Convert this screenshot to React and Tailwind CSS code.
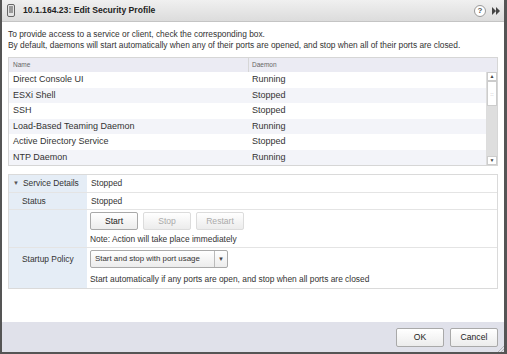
const rows = [
  ["Direct Console UI", "Running"],
  ["ESXi Shell", "Stopped"],
  ["SSH", "Stopped"],
  ["Load-Based Teaming Daemon", "Running"],
  ["Active Directory Service", "Stopped"],
  ["NTP Daemon", "Running"],
];

function Btn({ children, disabled, className = "" }) {
  return (
    <div
      className={`flex h-[18px] w-[48px] items-center justify-center rounded-[2px] border bg-gradient-to-b from-white to-[#ececec] text-[8.6px] ${
        disabled ? "border-[#dcdcdc] text-[#aaa]" : "border-[#a9a9a9] text-[#222]"
      } ${className}`}
    >
      {children}
    </div>
  );
}

export default function App() {
  return (
    <div
      className="flex h-[354px] w-[507px] flex-col border-b-2 border-l-2 border-r-[3px] border-[#555] bg-white text-[#333]"
      style={{ fontFamily: '"Liberation Sans", Arial, sans-serif' }}
    >
      <div className="flex h-[22px] shrink-0 items-center border-b border-[#c4c4c4] bg-gradient-to-b from-[#f0f0f0] to-[#dcdcdc] pl-[4px] pr-[4px]">
        <svg width="8" height="13" viewBox="0 0 8 13" className="ml-[1px]">
          <rect x="0.5" y="0.5" width="7" height="12" rx="1.5" fill="#e4e4e4" stroke="#666" />
          <rect x="2" y="2" width="4" height="7" fill="#9a9a9a" />
        </svg>
        <span className="ml-[8px] text-[8.6px] font-bold text-[#222]">10.1.164.23: Edit Security Profile</span>
        <div className="ml-auto flex items-center gap-[6px]">
          <div className="flex h-[12px] w-[12px] items-center justify-center rounded-full border border-[#999] bg-white text-[8px] font-bold text-[#555]">?</div>
          <svg width="8" height="8" viewBox="0 0 8 8">
            <path d="M0 0 L4 4 L0 8Z M4 0 L8 4 L4 8Z" fill="#444" />
          </svg>
        </div>
      </div>

      <div className="flex flex-1 flex-col px-[6px] pt-[7px]">
        <p className="text-[8.35px] leading-[11px]">To provide access to a service or client, check the corresponding box.</p>
        <p className="text-[8.35px] leading-[11px]">
          By default, daemons will start automatically when any of their ports are opened, and stop when all of their ports are closed.
        </p>

        <div className="mt-[6px] w-[490px] border border-[#d6d6d6]">
          <div className="flex h-[14px] items-center bg-[#ebebf3] text-[6.5px] text-[#666]">
            <div className="w-[240px] self-stretch border-r border-[#d6d6d6] pl-[4px] leading-[14px]">Name</div>
            <div className="pl-[3px]">Daemon</div>
          </div>
          <div className="flex">
            <div className="flex-1">
              {rows.map(([n, s], i) => (
                <div
                  key={n}
                  className={`flex h-[15.5px] items-center text-[9px] ${i % 2 ? "bg-[#f3f4f9]" : "bg-white"}`}
                >
                  <div className="w-[240px] pl-[4px]">{n}</div>
                  <div className="pl-[3px]">{s}</div>
                </div>
              ))}
            </div>
            <div className="flex w-[11px] flex-col border-l border-[#ddd] bg-white">
              <div className="flex h-[9px] items-center justify-center border border-[#ccc] text-[5px] text-[#444]">▲</div>
              <div className="flex h-[25px] items-center justify-center border border-[#ccc] bg-white text-[6px] leading-none text-[#999]">::</div>
              <div className="flex-1 bg-[#dedede]" />
              <div className="flex h-[9px] items-center justify-center border border-[#ccc] text-[5px] text-[#444]">▼</div>
            </div>
          </div>
        </div>

        <div className="mt-[8px] w-[490px] border border-[#dadada] text-[8.4px]">
          <div className="flex h-[18px] items-center border-b border-[#e4e4e4]">
            <div className="flex w-[78px] items-center self-stretch bg-[#e5edf6] pl-[4px]">
              <span className="mr-[4px] text-[6px] text-[#555]">▼</span>Service Details
            </div>
            <div className="pl-[4px]">Stopped</div>
          </div>
          <div className="flex h-[17px] items-center border-b border-[#e4e4e4]">
            <div className="flex w-[78px] items-center self-stretch bg-[#e5edf6] pl-[13px]">Status</div>
            <div className="pl-[4px]">Stopped</div>
          </div>
          <div className="flex border-b border-[#e4e4e4]">
            <div className="w-[78px] bg-[#e5edf6]" />
            <div className="flex flex-col pl-[3px] pt-[2px] pb-[2px]">
              <div className="flex gap-[5px]">
                <Btn>Start</Btn>
                <Btn disabled>Stop</Btn>
                <Btn disabled>Restart</Btn>
              </div>
              <div className="mt-[3px] leading-[12px]">Note: Action will take place immediately</div>
            </div>
          </div>
          <div className="flex">
            <div className="w-[78px] bg-[#e5edf6] pl-[13px] pt-[5px]">Startup Policy</div>
            <div className="flex flex-col items-start pl-[3px] pt-[2px] pb-[3px]">
              <div className="flex h-[18px] w-[138px] shrink-0 items-center overflow-hidden rounded-[2px] border border-[#a9a9a9] bg-gradient-to-b from-white to-[#ececec]">
                <span className="min-w-0 flex-1 whitespace-nowrap pl-[4px] text-[7.9px]">Start and stop with port usage</span>
                <span className="flex h-full w-[13px] shrink-0 items-center justify-center border-l border-[#bbb] text-[6px] text-[#444]">▼</span>
              </div>
              <div className="mt-[5px] leading-[12px]">
                Start automatically if any ports are open, and stop when all ports are closed
              </div>
            </div>
          </div>
        </div>
      </div>

      <div className="relative flex h-[30px] shrink-0 items-center justify-end gap-[6px] bg-[#e0e1ea] pr-[6px]">
        <Btn className="h-[19px]">OK</Btn>
        <Btn className="h-[19px]">Cancel</Btn>
        <svg width="6" height="6" viewBox="0 0 6 6" className="absolute bottom-0 right-0">
          <path d="M6 0 L0 6 M6 3 L3 6" stroke="#aaa" strokeWidth="0.8" />
        </svg>
      </div>
    </div>
  );
}
